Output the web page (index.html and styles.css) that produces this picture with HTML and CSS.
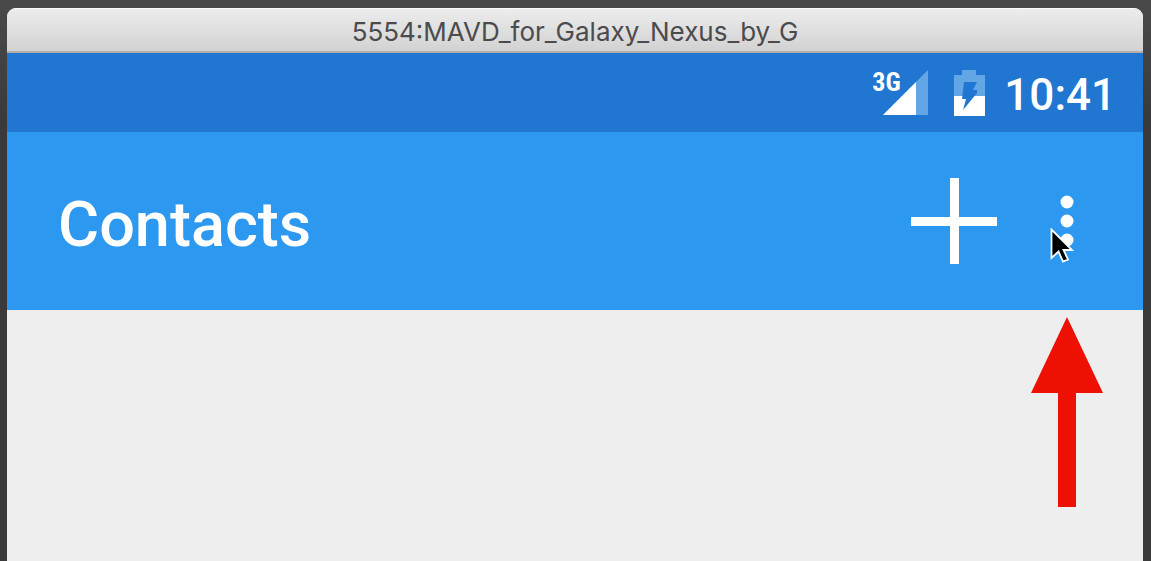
FILE: index.html
```html
<!DOCTYPE html>
<html lang="en">
<head>
<meta charset="utf-8">
<meta name="viewport" content="width=device-width, initial-scale=1">
<title>Contacts</title>
<link rel="stylesheet" href="styles.css">
</head>
<body>
<div class="window">
  <div class="titlebar">5554:MAVD_for_Galaxy_Nexus_by_G</div>
  <div class="statusbar">
    <div class="network">
      <span class="network-type">3G</span>
      <svg class="signal" viewBox="0 0 46 46" aria-hidden="true">
        <path d="M0 45 45 0V45Z" fill="#63a6e6"/>
        <path d="M0 45 33 12V45Z" fill="#fff"/>
      </svg>
    </div>
    <svg class="battery" viewBox="0 0 31 46" aria-hidden="true">
      <path d="M8 0H22V5H31V26H0V5H8Z" fill="#63a6e6"/>
      <path d="M0 26H31V46H0Z" fill="#fff"/>
      <path d="M10 12H23L19 20H23V23L9 40 12 29H8Z" fill="#2176d2"/>
    </svg>
    <time class="clock">10:41</time>
  </div>
  <header class="appbar">
    <h1 class="heading">Contacts</h1>
    <button class="action add" type="button" aria-label="Add contact">
      <svg viewBox="0 0 86 86" aria-hidden="true"><path d="M39 0H48V39H86V48H48V86H39V48H0V39H39Z" fill="#fff"/></svg>
    </button>
    <button class="action more" type="button" aria-label="More options">
      <svg class="dots" viewBox="0 0 14 52" aria-hidden="true"><g fill="#fff"><circle cx="7" cy="7" r="6.500"/><circle cx="7" cy="26" r="6.500"/><circle cx="7" cy="45" r="6.500"/></g></svg>
      <svg class="pointer" viewBox="0 0 24 36" aria-hidden="true"><path d="M1.500 1.500V30L8.500 23.500 13 33.500 18 31.500 13.500 22H22Z" fill="#000" stroke="#fff" stroke-width="1.800"/></svg>
    </button>
  </header>
  <main class="content">
    <svg class="arrow" viewBox="0 0 72 190" aria-hidden="true"><path d="M36 0 72 76H45V190H27V76H0Z" fill="#ee1103"/></svg>
  </main>
</div>
</body>
</html>
```
FILE: styles.css
```css
* {
  box-sizing: border-box;
}

body {
  margin: 0;
  min-height: 100vh;
  display: flex;
  padding: 8px 8px 0 7px;
  background: linear-gradient(#4a4a4a, #3a3a3a 120px);
  font-family: Roboto, "Liberation Sans", sans-serif;
  color: #fff;
}

.window {
  flex: 1;
  display: flex;
  flex-direction: column;
  overflow: hidden;
  border-radius: 9px 9px 0 0;
  background: #eee;
}

.titlebar {
  padding: 7px 16px 4px;
  border-top: 1px solid #fafafa;
  border-bottom: 2px solid #b5afa8;
  background: linear-gradient(#ececec, #d2d2d2);
  color: #4b4b4e;
  font-family: Inter, Roboto, sans-serif;
  font-size: 26px;
  line-height: 31px;
  text-align: center;
}

.statusbar {
  display: flex;
  align-items: center;
  justify-content: flex-end;
  height: 79px;
  padding-right: 27px;
  background: #2176d2;
}

.network {
  position: relative;
  margin-right: 25px;
  padding-left: 11px;
}

.network-type {
  position: absolute;
  top: 0;
  left: 0;
  font-family: "Roboto Condensed", Roboto, sans-serif;
  font-size: 26px;
  font-weight: 700;
  line-height: 24px;
}

.signal {
  display: block;
  width: 46px;
  height: 46px;
}

.battery {
  width: 31px;
  height: 46px;
  margin-right: 19px;
}

.clock {
  padding-top: 4px;
  font-size: 44px;
  font-weight: 500;
  line-height: 54px;
}

.appbar {
  display: flex;
  align-items: center;
  height: 178px;
  padding: 0 69px 0 51px;
  background: #2c98f0;
}

.heading {
  flex: 1;
  margin: 0;
  padding-top: 8px;
  font-size: 63px;
  font-weight: 500;
  line-height: 74px;
}

.action {
  display: block;
  padding: 0;
  border: 0;
  background: none;
}

.add {
  width: 86px;
  height: 86px;
  margin-right: 63px;
}

.more {
  position: relative;
  width: 14px;
  height: 52px;
}

.action svg {
  display: block;
}

.action .pointer {
  position: absolute;
  top: 33px;
  left: -10px;
  width: 24px;
  height: 36px;
}

.content {
  display: flex;
  flex: 1;
  align-items: flex-start;
  justify-content: flex-end;
  padding: 7px 40px 54px;
}

.arrow {
  width: 72px;
  height: 190px;
}
```
